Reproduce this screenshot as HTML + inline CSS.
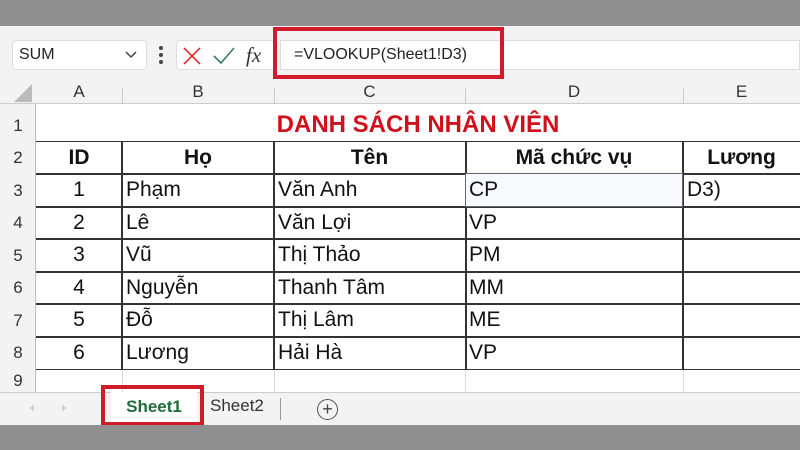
<!DOCTYPE html>
<html><head><meta charset="utf-8"><style>
*{margin:0;padding:0;box-sizing:border-box}
body{width:800px;height:450px;overflow:hidden;background:#fff;font-family:"Liberation Sans",Arial,sans-serif;position:relative}
.a{position:absolute}
.t{font-size:21px;color:#111;white-space:nowrap;line-height:32px}
.h{font-size:17px;color:#333;text-align:center;top:80px;line-height:24px}
.r{font-size:17px;color:#333;left:0;width:36px;text-align:center}
</style></head><body>
<div class="a" style="left:0;top:0;width:800px;height:26px;background:#8f8f8f"></div>
<div class="a" style="left:0;top:26px;width:800px;height:54px;background:#f3f3f3"></div>
<div class="a" style="left:12px;top:40px;width:135px;height:30px;background:#fff;border:1px solid #ddd;border-radius:4px"></div>
<div class="a t" style="left:19px;top:39px;font-size:16px;color:#222">SUM</div>
<svg class="a" style="left:125px;top:51px" width="12" height="8"><path d="M1 1l5 5 5-5" stroke="#444" stroke-width="1.5" fill="none"/></svg>
<div class="a" style="left:159px;top:46px;width:4px;height:4px;background:#444;border-radius:2px"></div>
<div class="a" style="left:159px;top:53px;width:4px;height:4px;background:#444;border-radius:2px"></div>
<div class="a" style="left:159px;top:60px;width:4px;height:4px;background:#444;border-radius:2px"></div>
<div class="a" style="left:176px;top:40px;width:100px;height:30px;background:#fff;border:1px solid #ddd;border-radius:4px 0 0 4px"></div>
<svg class="a" style="left:182px;top:46px" width="20" height="20"><path d="M2 2l16 16M18 2L2 18" stroke="#d33" stroke-width="1.6"/></svg>
<svg class="a" style="left:212px;top:46px" width="24" height="20"><path d="M2 10l7 7L22 2" stroke="#3a7a5a" stroke-width="1.6" fill="none"/></svg>
<div class="a t" style="left:246px;top:39px;font-family:'Liberation Serif',serif;font-style:italic;font-size:21px;color:#333">fx</div>
<div class="a" style="left:280px;top:40px;width:520px;height:30px;background:#fff;border:1px solid #ddd"></div>
<div class="a t" style="left:294px;top:40px;font-size:16px;color:#222;line-height:30px">=VLOOKUP(Sheet1!D3)</div>
<div class="a" style="left:273px;top:27px;width:231px;height:52px;border:4px solid #d11a2a"></div>
<!-- column headers -->
<div class="a" style="left:0;top:80px;width:800px;height:24px;background:#f3f3f3;border-bottom:1px solid #ccc"></div>
<svg class="a" style="left:14px;top:84px" width="18" height="18"><path d="M18 0V18H0Z" fill="#bbb"/></svg>
<div class="a h" style="left:36px;width:86px">A</div>
<div class="a h" style="left:122px;width:152px">B</div>
<div class="a h" style="left:274px;width:191px">C</div>
<div class="a h" style="left:465px;width:218px">D</div>
<div class="a h" style="left:683px;width:117px">E</div>
<div class="a" style="left:122px;top:88px;width:1px;height:16px;background:#ccc"></div>
<div class="a" style="left:274px;top:88px;width:1px;height:16px;background:#ccc"></div>
<div class="a" style="left:465px;top:88px;width:1px;height:16px;background:#ccc"></div>
<div class="a" style="left:683px;top:88px;width:1px;height:16px;background:#ccc"></div>
<!-- row headers -->
<div class="a" style="left:0;top:104px;width:36px;height:288px;background:#f3f3f3;border-right:1px solid #bbb"></div>
<div class="a r" style="top:108px;line-height:36px">1</div>
<div class="a r" style="top:141px;line-height:33px">2</div>
<div class="a r" style="top:174px;line-height:33px">3</div>
<div class="a r" style="top:206px;line-height:33px">4</div>
<div class="a r" style="top:239px;line-height:33px">5</div>
<div class="a r" style="top:271px;line-height:33px">6</div>
<div class="a r" style="top:304px;line-height:33px">7</div>
<div class="a r" style="top:336px;line-height:33px">8</div>
<div class="a r" style="top:369px;line-height:23px">9</div>
<!-- light grid for rows 1,9 -->
<div class="a" style="left:122px;top:369px;width:1px;height:23px;background:#ddd"></div>
<div class="a" style="left:274px;top:369px;width:1px;height:23px;background:#ddd"></div>
<div class="a" style="left:465px;top:369px;width:1px;height:23px;background:#ddd"></div>
<div class="a" style="left:683px;top:369px;width:1px;height:23px;background:#ddd"></div>
<div class="a t" style="left:36px;width:764px;top:109px;text-align:center;color:#d0101c;font-weight:bold;font-size:24px">DANH SÁCH NHÂN VIÊN</div>
<!-- table borders -->
<div class="a" style="left:36px;top:141px;width:764px;height:229px;border-top:1.5px solid #333;border-bottom:1.5px solid #333"></div>
<div class="a" style="left:36px;top:173px;width:764px;height:1.5px;background:#333"></div>
<div class="a" style="left:36px;top:206px;width:764px;height:1.5px;background:#333"></div>
<div class="a" style="left:36px;top:238px;width:764px;height:1.5px;background:#333"></div>
<div class="a" style="left:36px;top:271px;width:764px;height:1.5px;background:#333"></div>
<div class="a" style="left:36px;top:303px;width:764px;height:1.5px;background:#333"></div>
<div class="a" style="left:36px;top:336px;width:764px;height:1.5px;background:#333"></div>
<div class="a" style="left:121px;top:141px;width:1.5px;height:229px;background:#333"></div>
<div class="a" style="left:273px;top:141px;width:1.5px;height:229px;background:#333"></div>
<div class="a" style="left:465px;top:141px;width:1.5px;height:229px;background:#333"></div>
<div class="a" style="left:682px;top:141px;width:1.5px;height:229px;background:#333"></div>
<div class="a" style="left:465px;top:173px;width:218px;height:34px;border:1.5px solid #667;background:#f7f9fc"></div>
<!-- header row -->
<div class="a t" style="left:36px;width:86px;top:142px;text-align:center;font-weight:bold">ID</div>
<div class="a t" style="left:122px;width:152px;top:142px;text-align:center;font-weight:bold">Họ</div>
<div class="a t" style="left:274px;width:191px;top:142px;text-align:center;font-weight:bold">Tên</div>
<div class="a t" style="left:465px;width:218px;top:142px;text-align:center;font-weight:bold">Mã chức vụ</div>
<div class="a t" style="left:683px;width:117px;top:142px;text-align:center;font-weight:bold">Lương</div>
<!-- data -->
<div class="a t" style="left:36px;width:86px;top:174px;text-align:center">1</div>
<div class="a t" style="left:36px;width:86px;top:207px;text-align:center">2</div>
<div class="a t" style="left:36px;width:86px;top:239px;text-align:center">3</div>
<div class="a t" style="left:36px;width:86px;top:272px;text-align:center">4</div>
<div class="a t" style="left:36px;width:86px;top:304px;text-align:center">5</div>
<div class="a t" style="left:36px;width:86px;top:337px;text-align:center">6</div>
<div class="a t" style="left:126px;top:174px">Phạm</div>
<div class="a t" style="left:126px;top:207px">Lê</div>
<div class="a t" style="left:126px;top:239px">Vũ</div>
<div class="a t" style="left:126px;top:272px">Nguyễn</div>
<div class="a t" style="left:126px;top:304px">Đỗ</div>
<div class="a t" style="left:126px;top:337px">Lương</div>
<div class="a t" style="left:278px;top:174px">Văn Anh</div>
<div class="a t" style="left:278px;top:207px">Văn Lợi</div>
<div class="a t" style="left:278px;top:239px">Thị Thảo</div>
<div class="a t" style="left:278px;top:272px">Thanh Tâm</div>
<div class="a t" style="left:278px;top:304px">Thị Lâm</div>
<div class="a t" style="left:278px;top:337px">Hải Hà</div>
<div class="a t" style="left:469px;top:174px">CP</div>
<div class="a t" style="left:469px;top:207px">VP</div>
<div class="a t" style="left:469px;top:239px">PM</div>
<div class="a t" style="left:469px;top:272px">MM</div>
<div class="a t" style="left:469px;top:304px">ME</div>
<div class="a t" style="left:469px;top:337px">VP</div>
<div class="a t" style="left:687px;top:174px">D3)</div>
<!-- tab bar -->
<div class="a" style="left:0;top:392px;width:800px;height:33px;background:#f3f3f3;border-top:1px solid #ccc"></div>
<div class="a" style="left:30px;top:404px;width:0;height:0;border:4px solid transparent;border-right:4px solid #ccc;border-left:0"></div>
<div class="a" style="left:62px;top:404px;width:0;height:0;border:4px solid transparent;border-left:4px solid #ccc;border-right:0"></div>
<div class="a" style="left:111px;top:392px;width:86px;height:31px;background:#fff"></div>
<div class="a t" style="left:111px;width:86px;top:391px;text-align:center;font-size:17px;font-weight:bold;color:#1e6b3c">Sheet1</div>
<div class="a" style="left:101px;top:385px;width:103px;height:41px;border:4px solid #d11a2a"></div>
<div class="a t" style="left:210px;top:390px;font-size:17px;color:#333">Sheet2</div>
<div class="a" style="left:280px;top:398px;width:1px;height:22px;background:#999"></div>
<div class="a" style="left:317px;top:399px;width:21px;height:21px;border:1.3px solid #555;border-radius:50%;text-align:center;line-height:18px;font-size:18px;color:#444">+</div>
<div class="a" style="left:0;top:425px;width:800px;height:25px;background:#8f8f8f"></div>
</body></html>
